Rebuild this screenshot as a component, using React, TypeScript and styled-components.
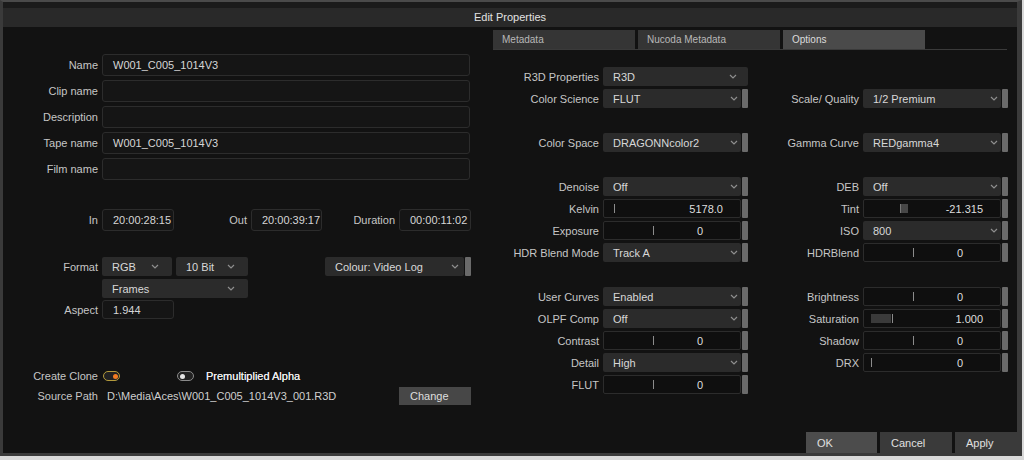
import React from "react";
import styled, { createGlobalStyle } from "styled-components";

const GlobalStyle = createGlobalStyle`
  html, body {
    margin: 0;
    padding: 0;
    background: #d9d9d9;
  }
  body {
    font-family: "Liberation Sans", Arial, sans-serif;
    font-size: 11px;
    color: #c8c8c8;
  }
  * { box-sizing: border-box; }
`;

type Cell =
  | { kind: "select"; label: string; value: string; bar?: boolean }
  | {
      kind: "slider";
      label: string;
      value: string;
      mark: number;
      center?: boolean;
      block?: boolean;
      fill?: number;
    }
  | null;

type Row = [Cell, Cell] | "gap";

const rows: Row[] = [
  [{ kind: "select", label: "R3D Properties", value: "R3D" }, null],
  [
    { kind: "select", label: "Color Science", value: "FLUT", bar: true },
    { kind: "select", label: "Scale/ Quality", value: "1/2 Premium", bar: true },
  ],
  "gap",
  [
    { kind: "select", label: "Color Space", value: "DRAGONNcolor2", bar: true },
    { kind: "select", label: "Gamma Curve", value: "REDgamma4", bar: true },
  ],
  "gap",
  [
    { kind: "select", label: "Denoise", value: "Off", bar: true },
    { kind: "select", label: "DEB", value: "Off", bar: true },
  ],
  [
    { kind: "slider", label: "Kelvin", value: "5178.0", mark: 11 },
    { kind: "slider", label: "Tint", value: "-21.315", mark: 37, block: true },
  ],
  [
    { kind: "slider", label: "Exposure", value: "0", mark: 50, center: true },
    { kind: "select", label: "ISO", value: "800", bar: true },
  ],
  [
    { kind: "select", label: "HDR Blend Mode", value: "Track A", bar: true },
    { kind: "slider", label: "HDRBlend", value: "0", mark: 50, center: true },
  ],
  "gap",
  [
    { kind: "select", label: "User Curves", value: "Enabled", bar: true },
    { kind: "slider", label: "Brightness", value: "0", mark: 50, center: true },
  ],
  [
    { kind: "select", label: "OLPF Comp", value: "Off", bar: true },
    { kind: "slider", label: "Saturation", value: "1.000", mark: 29, fill: 20 },
  ],
  [
    { kind: "slider", label: "Contrast", value: "0", mark: 50, center: true },
    { kind: "slider", label: "Shadow", value: "0", mark: 50, center: true },
  ],
  [
    { kind: "select", label: "Detail", value: "High", bar: true },
    { kind: "slider", label: "DRX", value: "0", mark: 8, center: true },
  ],
  [{ kind: "slider", label: "FLUT", value: "0", mark: 50, center: true }, null],
];

const Window = styled.div`
  width: 1022px;
  height: 456px;
  background: #121212;
  border: 3px solid #3a3a3a;
  border-top: 2px solid #4a4a4a;
  border-right-width: 5px;
  display: flex;
  flex-direction: column;
`;

const TitleBar = styled.div`
  box-sizing: content-box;
  height: 19px;
  border-top: 6px solid #1b1b1b;
  background: #292929;
  color: #e2e2e2;
  text-align: center;
  line-height: 19px;
  font-size: 11px;
`;

const Main = styled.div`
  flex: 1;
  display: flex;
`;

const LeftPane = styled.div`
  width: 487px;
  padding-top: 27px;
  display: flex;
  flex-direction: column;
`;

const RightPane = styled.div`
  flex: 1;
  display: flex;
  flex-direction: column;
`;

const FieldGrid = styled.div`
  display: grid;
  grid-template-columns: 95px 368px;
  grid-auto-rows: 22px;
  column-gap: 4px;
  row-gap: 4px;
`;

const Label = styled.div<{ $w?: number }>`
  width: ${(p) => (p.$w ? `${p.$w}px` : "auto")};
  flex: none;
  text-align: right;
  color: #c6c6c6;
  white-space: nowrap;
  align-self: center;
`;

const TextBox = styled.div<{ $w?: number }>`
  width: ${(p) => (p.$w ? `${p.$w}px` : "auto")};
  height: 100%;
  flex: none;
  display: flex;
  align-items: center;
  padding-left: 10px;
  background: #151515;
  border: 1px solid #2c2c2c;
  border-radius: 3px;
  color: #d6d6d6;
`;

const LineRow = styled.div<{ $mt: number; $h: number }>`
  margin-top: ${(p) => p.$mt}px;
  height: ${(p) => p.$h}px;
  display: flex;
  align-items: center;
  gap: 4px;
`;

const Select = styled.div<{ $w?: number; $pr: number }>`
  width: ${(p) => (p.$w ? `${p.$w}px` : "auto")};
  flex: ${(p) => (p.$w ? "none" : "1")};
  height: 100%;
  display: flex;
  align-items: center;
  justify-content: space-between;
  padding: 0 ${(p) => p.$pr}px 0 10px;
  background: #2b2b2b;
  border-radius: 2px;
  color: #d8d8d8;
  white-space: nowrap;
`;

const Bar = styled.div`
  width: 6px;
  height: 100%;
  flex: none;
  background: #6a6a6a;
  border-radius: 1px;
`;

const Combo = styled.div<{ $w?: number; $ml?: number }>`
  width: ${(p) => (p.$w ? `${p.$w}px` : "100%")};
  margin-left: ${(p) => p.$ml ?? 0}px;
  height: 100%;
  display: flex;
  gap: 1px;
`;

const Toggle = styled.div<{ $on?: boolean; $ml?: number }>`
  width: 17px;
  height: 10px;
  flex: none;
  margin-left: ${(p) => p.$ml ?? 0}px;
  border-radius: 5px;
  border: 1.5px solid ${(p) => (p.$on ? "#b39a3c" : "#8a8a8a")};
  background: #222;
  display: flex;
  align-items: center;
  justify-content: ${(p) => (p.$on ? "flex-end" : "flex-start")};
  padding: 0 1.5px;
  &::after {
    content: "";
    width: 5px;
    height: 5px;
    border-radius: 50%;
    background: ${(p) => (p.$on ? "#f27b22" : "#e6e6e6")};
  }
`;

const ToggleText = styled.span`
  margin-left: 8px;
  color: #ececec;
  text-shadow: 0 0 0.4px #ececec;
`;

const PathText = styled.div`
  flex: 1;
  margin-left: 5px;
  color: #cfcfcf;
  white-space: nowrap;
`;

const SmallButton = styled.div`
  width: 72px;
  height: 18px;
  display: flex;
  align-items: center;
  padding-left: 11px;
  background: #474747;
  color: #dedede;
`;

const TabBar = styled.div`
  margin: 3px 0 0 3px;
  width: 514px;
  display: flex;
  gap: 3px;
  border-bottom: 1px solid #3a3a3a;
`;

const Tab = styled.div<{ $active?: boolean }>`
  width: 142px;
  height: 19px;
  display: flex;
  align-items: center;
  padding-left: 9px;
  font-size: 10px;
  background: ${(p) => (p.$active ? "#4a4a4a" : "#353535")};
  color: ${(p) => (p.$active ? "#dcdcdc" : "#b8b8b8")};
`;

const PropGrid = styled.div`
  margin: 17px 0 0 4px;
  display: grid;
  grid-template-columns: 105px 145px 107px 145px;
  grid-auto-rows: 19px;
  column-gap: 4px;
  row-gap: 3px;
`;

const GapRow = styled.div`
  grid-column: 1 / -1;
`;

const SliderBox = styled.div`
  flex: 1;
  height: 100%;
  display: flex;
  align-items: center;
  background: #0f0f0f;
  border: 1px solid #2c2c2c;
  border-radius: 2px;
`;

const Track = styled.div`
  position: relative;
  width: 73px;
  height: 100%;
  flex: none;
`;

const Mark = styled.div`
  position: absolute;
  top: 4px;
  bottom: 4px;
  width: 1px;
  background: #8c8c8c;
`;

const Block = styled.div`
  position: absolute;
  top: 4px;
  bottom: 4px;
  width: 8px;
  background: #474747;
  border-left: 1px solid #777;
`;

const Fill = styled.div`
  position: absolute;
  top: 4px;
  bottom: 4px;
  background: #3a3a3a;
`;

const Value = styled.div<{ $center?: boolean }>`
  width: 46px;
  text-align: ${(p) => (p.$center ? "center" : "right")};
  color: #dedede;
`;

const Footer = styled.div`
  height: 21px;
  display: flex;
  justify-content: flex-end;
  gap: 3px;
`;

const FootButton = styled.div<{ $w: number; $primary?: boolean }>`
  width: ${(p) => p.$w}px;
  display: flex;
  align-items: center;
  padding-left: 11px;
  background: ${(p) => (p.$primary ? "#4c4c4c" : "#3a3a3a")};
  color: #e0e0e0;
`;

function Chevron() {
  return (
    <svg width="8" height="5" viewBox="0 0 8 5">
      <path d="M1 1 L4 4 L7 1" stroke="#8e8e8e" strokeWidth="1.2" fill="none" />
    </svg>
  );
}

function Drop({ value, bar, w, ml, pr }: { value: string; bar?: boolean; w?: number; ml?: number; pr: number }) {
  return (
    <Combo $w={w} $ml={ml}>
      <Select $pr={bar ? pr : pr + 8}>
        <span>{value}</span>
        <Chevron />
      </Select>
      {bar && <Bar />}
    </Combo>
  );
}

function PropCell({ cell }: { cell: Cell }) {
  if (!cell) return (
    <>
      <div />
      <div />
    </>
  );
  return (
    <>
      <Label>{cell.label}</Label>
      {cell.kind === "select" ? (
        <Drop value={cell.value} bar={cell.bar} pr={3} />
      ) : (
        <Combo>
          <SliderBox>
            <Track>
              {cell.fill !== undefined && <Fill style={{ left: 7, width: cell.fill }} />}
              {cell.block ? <Block style={{ left: cell.mark - 1 }} /> : <Mark style={{ left: cell.mark - 1 }} />}
            </Track>
            <Value $center={cell.center}>{cell.value}</Value>
          </SliderBox>
          <Bar />
        </Combo>
      )}
    </>
  );
}

export default function App() {
  return (
    <>
      <GlobalStyle />
      <Window>
        <TitleBar>Edit Properties</TitleBar>
        <Main>
          <LeftPane>
            <FieldGrid>
              <Label>Name</Label>
              <TextBox>W001_C005_1014V3</TextBox>
              <Label>Clip name</Label>
              <TextBox />
              <Label>Description</Label>
              <TextBox />
              <Label>Tape name</Label>
              <TextBox>W001_C005_1014V3</TextBox>
              <Label>Film name</Label>
              <TextBox />
            </FieldGrid>

            <LineRow $mt={29} $h={22}>
              <Label $w={95}>In</Label>
              <TextBox $w={72}>20:00:28:15</TextBox>
              <Label $w={69}>Out</Label>
              <TextBox $w={71}>20:00:39:17</TextBox>
              <Label $w={69}>Duration</Label>
              <TextBox $w={72}>00:00:11:02</TextBox>
            </LineRow>

            <LineRow $mt={26} $h={19}>
              <Label $w={95}>Format</Label>
              <Drop value="RGB" w={70} pr={5} />
              <Drop value="10 Bit" w={72} pr={5} />
              <Drop value="Colour: Video Log" bar w={146} ml={73} pr={5} />
            </LineRow>
            <LineRow $mt={3} $h={19}>
              <Label $w={95} />
              <Drop value="Frames" w={146} pr={5} />
            </LineRow>
            <LineRow $mt={2} $h={19}>
              <Label $w={95}>Aspect</Label>
              <TextBox $w={72}>1.944</TextBox>
            </LineRow>

            <LineRow $mt={50} $h={14}>
              <Label $w={95}>Create Clone</Label>
              <Toggle $on $ml={1} />
              <Toggle $ml={53} />
              <ToggleText>Premultiplied Alpha</ToggleText>
            </LineRow>
            <LineRow $mt={4} $h={18} style={{ width: 468 }}>
              <Label $w={95}>Source Path</Label>
              <PathText>{"D:\\Media\\Aces\\W001_C005_1014V3_001.R3D"}</PathText>
              <SmallButton>Change</SmallButton>
            </LineRow>
          </LeftPane>

          <RightPane>
            <TabBar>
              <Tab>Metadata</Tab>
              <Tab>Nucoda Metadata</Tab>
              <Tab $active>Options</Tab>
            </TabBar>
            <PropGrid>
              {rows.map((row, i) =>
                row === "gap" ? (
                  <GapRow key={i} />
                ) : (
                  <React.Fragment key={i}>
                    <PropCell cell={row[0]} />
                    <PropCell cell={row[1]} />
                  </React.Fragment>
                )
              )}
            </PropGrid>
          </RightPane>
        </Main>
        <Footer>
          <FootButton $w={71} $primary>OK</FootButton>
          <FootButton $w={72}>Cancel</FootButton>
          <FootButton $w={62}>Apply</FootButton>
        </Footer>
      </Window>
    </>
  );
}
